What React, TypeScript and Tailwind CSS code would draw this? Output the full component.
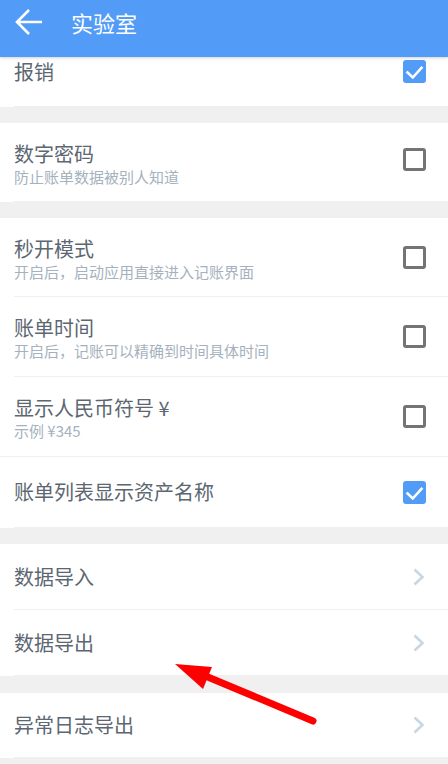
import React from "react";

const FONT = '"Noto Sans CJK SC", "Noto Sans", sans-serif';

function Checkbox({ checked, className = "" }: { checked: boolean; className?: string }) {
  if (checked) {
    return (
      <div className={`w-[23px] h-[23px] rounded-[3px] bg-[#529cf7] flex items-center justify-center shrink-0 ${className}`}>
        <svg width="23" height="23" viewBox="0 0 23 23">
          <path d="M4.5 12.5 L9.8 17.5 L18.5 7.8" fill="none" stroke="#fff" strokeWidth="2.6" strokeLinecap="square" />
        </svg>
      </div>
    );
  }
  return <div className={`w-[23px] h-[23px] rounded-[3px] border-[3px] border-[#747474] bg-white shrink-0 ${className}`} />;
}

function Chevron() {
  return (
    <svg width="12" height="18" viewBox="0 0 12 18" className="shrink-0">
      <path d="M1.5 1.5 L9.5 9 L1.5 16.5" fill="none" stroke="#c9d6e3" strokeWidth="2.6" />
    </svg>
  );
}

function ToggleRow({
  title,
  sub,
  checked,
  h,
  fullBorder,
  cbClass = "",
}: {
  title: string;
  sub?: string;
  checked: boolean;
  h: string;
  fullBorder?: boolean;
  cbClass?: string;
}) {
  return (
    <div className={`bg-white ${fullBorder ? "border-b border-[#efefef]" : "pl-[14px]"}`}>
      <div className={`${h} flex ${fullBorder ? "pl-[14px]" : "border-b border-[#efefef]"} pr-[22px] ${sub ? "items-start" : "items-center"}`}>
        <div className={`flex-1 flex flex-col ${sub ? "pt-[18px]" : ""}`}>
          <div className="text-[20px] leading-[26px] text-[#5c6772]">{title}</div>
          {sub && <div className="text-[15px] leading-[20px] text-[#a5b2be]">{sub}</div>}
        </div>
        <Checkbox checked={checked} className={sub ? `self-center ${cbClass}` : ""} />
      </div>
    </div>
  );
}

function NavRow({ title, h }: { title: string; h: string }) {
  return (
    <div className="bg-white pl-[14px]">
      <div className={`${h} flex items-center border-b border-[#efefef] pr-[23px]`}>
        <div className="flex-1 text-[20px] leading-[26px] text-[#5c6772]">{title}</div>
        <Chevron />
      </div>
    </div>
  );
}

export default function App() {
  return (
    <div className="relative w-[448px] h-[764px] overflow-hidden bg-[#f0f0f0]" style={{ fontFamily: FONT }}>
      <div className="relative z-10 h-[57px] bg-[#529bf7] flex items-center pb-[14px] shadow-[0_1px_3px_rgba(0,0,0,0.18)]">
        <svg width="44" height="42" viewBox="0 0 44 42">
          <path d="M29 9 L17 21 L29 33 M17 21 H42" fill="none" stroke="#fff" strokeWidth="2.6" strokeLinejoin="miter" />
        </svg>
        <div className="ml-[27px] text-[22px] leading-[30px] text-white">实验室</div>
      </div>

      <div className="bg-white pl-[14px]">
        <div className="h-[50px] flex items-center pb-[20px] border-b border-[#efefef] pr-[22px]">
          <div className="flex-1 text-[20px] leading-[26px] text-[#5c6772]">报销</div>
          <Checkbox checked />
        </div>
      </div>

      <div className="h-[16px]" />

      <ToggleRow title="数字密码" sub="防止账单数据被别人知道" checked={false} h="h-[79px]" cbClass="mb-[6px]" />

      <div className="h-[16px]" />

      <ToggleRow title="秒开模式" sub="开启后，启动应用直接进入记账界面" checked={false} h="h-[79px]" />
      <ToggleRow title="账单时间" sub="开启后，记账可以精确到时间具体时间" checked={false} h="h-[80px]" />
      <ToggleRow title="显示人民币符号 ¥" sub="示例 ¥345" checked={false} h="h-[79px]" fullBorder />
      <ToggleRow title="账单列表显示资产名称" checked h="h-[71px]" />

      <div className="h-[16px]" />

      <NavRow title="数据导入" h="h-[66px]" />
      <NavRow title="数据导出" h="h-[66px]" />

      <div className="h-[17px]" />

      <NavRow title="异常日志导出" h="h-[65px]" />

      <svg className="absolute left-0 top-0 pointer-events-none z-20" width="448" height="764" viewBox="0 0 448 764">
        <line x1="203" y1="675" x2="313" y2="721" stroke="#ff0000" strokeWidth="7" strokeLinecap="round" />
        <polygon points="175,664 212,667 203,689" fill="#ff0000" />
      </svg>
    </div>
  );
}
